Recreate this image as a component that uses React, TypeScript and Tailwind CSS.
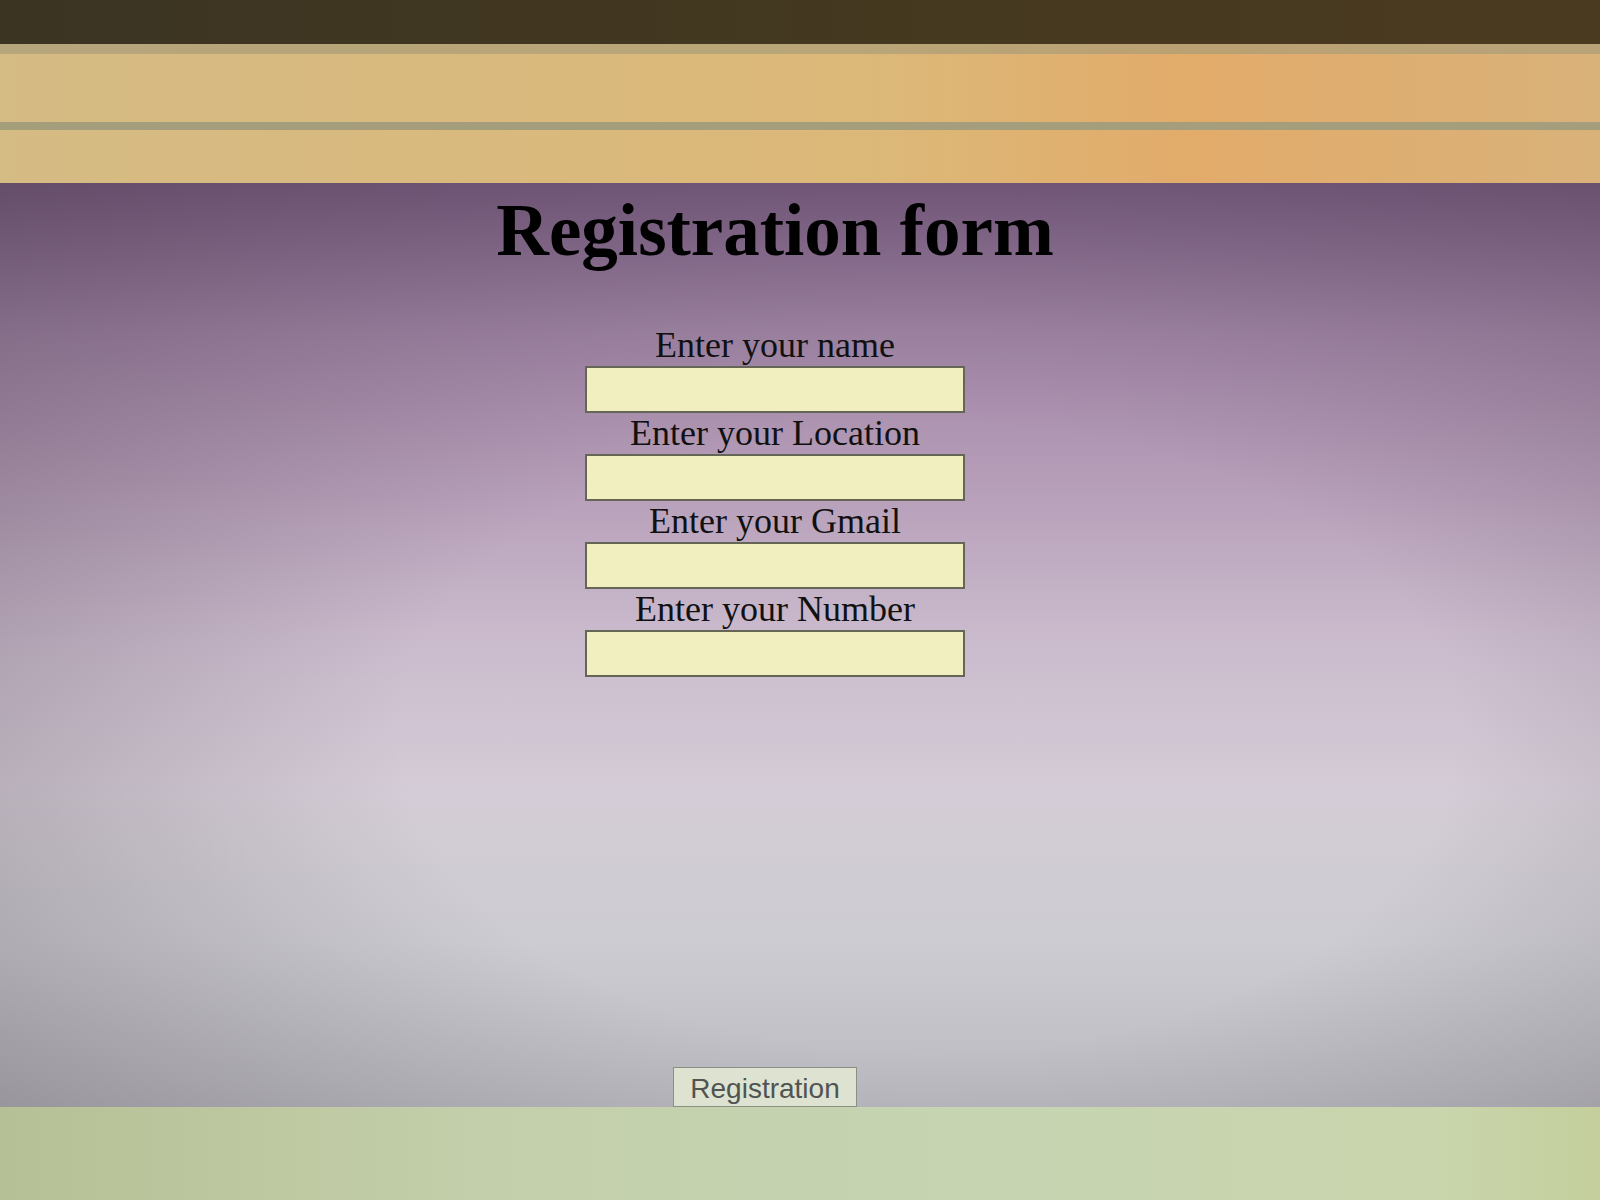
import React from 'react';

const fields = ['Enter your name', 'Enter your Location', 'Enter your Gmail', 'Enter your Number'];

const App = () => {
  return (
    <div className="w-[1600px] h-[1200px] flex flex-col overflow-hidden font-['Liberation_Serif','Times_New_Roman',serif]">
      {/* top edge of the window */}
      <div className="h-[44px] bg-[linear-gradient(90deg,#3b3423,#45391f_60%,#4a3a20)]"></div>

      {/* tan toolbar band */}
      <div className="h-[139px] flex flex-col bg-[linear-gradient(90deg,#d5bb84,#dcb878_55%,#e2ab6a_75%,#d9b27a)]">
        <div className="h-[10px] bg-[#a99c78]/70"></div>
        <div className="h-[68px]"></div>
        <div className="h-[8px] bg-[#a59e7c]"></div>
      </div>

      {/* form panel */}
      <div className="h-[924px] flex flex-col items-center pr-[50px] bg-[linear-gradient(180deg,#7c5e84_0%,#a185a6_16%,#b59db8_32%,#cbbccd_50%,#d4ccd6_66%,#cdccd2_82%,#bab9c0_100%)] relative">
        <div className="absolute inset-0 bg-[radial-gradient(ellipse_at_58%_60%,rgba(0,0,0,0)_40%,rgba(55,45,55,0.34)_100%)] pointer-events-none"></div>

        <h1 className="relative mt-[6px] text-[73px] leading-[84px] font-bold text-black">Registration form</h1>

        <form className="relative mt-[52px] flex flex-col items-center">
          {fields.map((label) => (
            <div key={label} className="flex flex-col items-center">
              <label className="text-[36px] leading-[41px] text-[#111]">{label}</label>
              <input
                type="text"
                className="w-[380px] h-[47px] bg-[#f1eebf] border-2 border-[#666657] outline-none"
              />
            </div>
          ))}
        </form>

        <div className="flex-1"></div>

        <button className="relative mr-[20px] w-[184px] h-[40px] bg-[#dde3d0] border border-[#8b8f85] text-[28px] text-[#505452] font-['Liberation_Sans',Arial,sans-serif]">
          Registration
        </button>
      </div>

      {/* desk below */}
      <div className="flex-1 bg-[linear-gradient(90deg,#b6c096,#c3cfaa_30%,#c6d4b2_60%,#c9d5ac_90%,#c4cf9c)]"></div>
    </div>
  );
};

export default App;
